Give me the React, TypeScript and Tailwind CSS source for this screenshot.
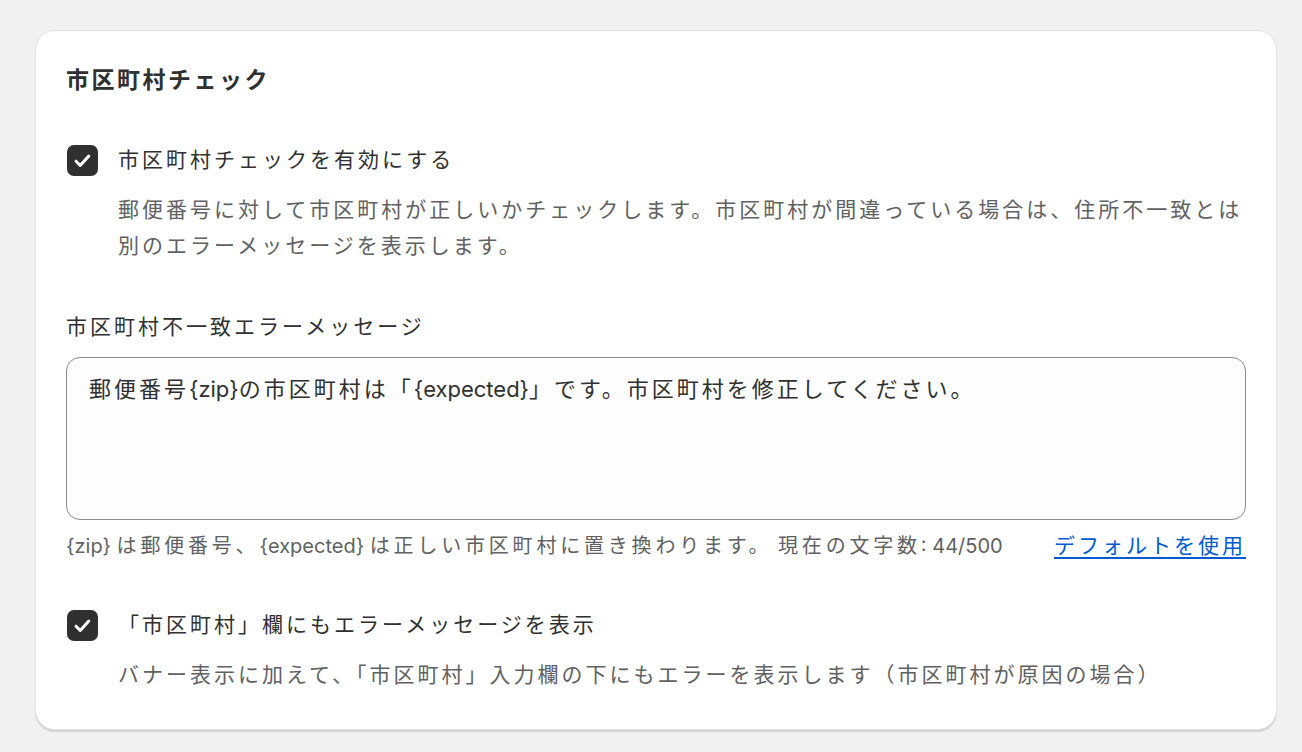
import React from 'react';

// CJK runs get extra tracking so the glyph pitch matches the reference (Latin stays tight)
const J = ({ t, k = 'tracking-[3px]' }: { t: string; k?: string }) => (
  <>
    {t.split(/([\u3000-\u30ff\u4e00-\u9fff\uff00-\uffef]+)/).map((s, i) =>
      i % 2 ? (
        <span key={i} className={k}>
          {s}
        </span>
      ) : (
        s
      )
    )}
  </>
);

const Checkbox = () => (
  <div className="w-[31px] h-[31px] rounded-[7px] bg-[#303030] flex items-center justify-center shrink-0">
    <svg width="31" height="31" viewBox="0 0 31 31" fill="none">
      <path d="M9 16.2l4.2 4.2 8.6-9.4" stroke="#fff" strokeWidth="3" strokeLinecap="round" strokeLinejoin="round" />
    </svg>
  </div>
);

const Option = ({ label, help }: { label: string; help: React.ReactNode }) => (
  <div>
    <div className="flex items-center h-[36px] pl-[1px]">
      <Checkbox />
      <span className="ml-[20px] text-[#303030]">
        <J t={label} />
      </span>
    </div>
    <div className="pl-[52px] mt-[14px] text-[#616161]">{help}</div>
  </div>
);

export default function App() {
  return (
    <div
      className="min-h-[752px] bg-[#f1f1f1] pt-[30px] px-[35px] text-[21px] leading-[36px]"
      style={{ fontFamily: 'Inter, "Noto Sans CJK JP", sans-serif' }}
    >
      <div className="w-[1242px] bg-white rounded-[20px] border border-[#e3e3e3] shadow-[0_2px_1px_#d4d4d4] px-[30px] pt-[31px] pb-[36px]">
        <h2 className="text-[23px] font-bold text-[#303030] leading-[36px]">
          <J t="市区町村チェック" k="tracking-[2.5px]" />
        </h2>

        <div className="mt-[44px]">
          <Option
            label="市区町村チェックを有効にする"
            help={
              <>
                <J t="郵便番号に対して市区町村が正しいかチェックします。市区町村が間違っている場合は、住所不一致とは" />
                <br />
                <J t="別のエラーメッセージを表示します。" />
              </>
            }
          />
        </div>

        <div className="mt-[45px] text-[#303030]">
          <J t="市区町村不一致エラーメッセージ" />
        </div>
        <div className="mt-[12px] h-[163px] rounded-[14px] border border-[#8a8a8a] bg-[#fdfdfd] px-[22px] pt-[13px] text-[22px] text-[#303030]">
          <J t="郵便番号{zip}の市区町村は「{expected}」です。市区町村を修正してください。" k="tracking-[3px]" />
        </div>
        <div className="mt-[8px] flex items-center justify-between text-[#616161]">
          <span className="text-[20px]">
            <J t="{zip} は郵便番号、{expected} は正しい市区町村に置き換わります。 現在の文字数: 44/500" k="tracking-[3.8px]" />
          </span>
          <a href="#" className="text-[#005bd3] underline underline-offset-[4px]">
            <J t="デフォルトを使用" />
          </a>
        </div>

        <div className="mt-[43px]">
          <Option
            label="「市区町村」欄にもエラーメッセージを表示"
            help={<J t="バナー表示に加えて、「市区町村」入力欄の下にもエラーを表示します（市区町村が原因の場合）" />}
          />
        </div>
      </div>
    </div>
  );
}
